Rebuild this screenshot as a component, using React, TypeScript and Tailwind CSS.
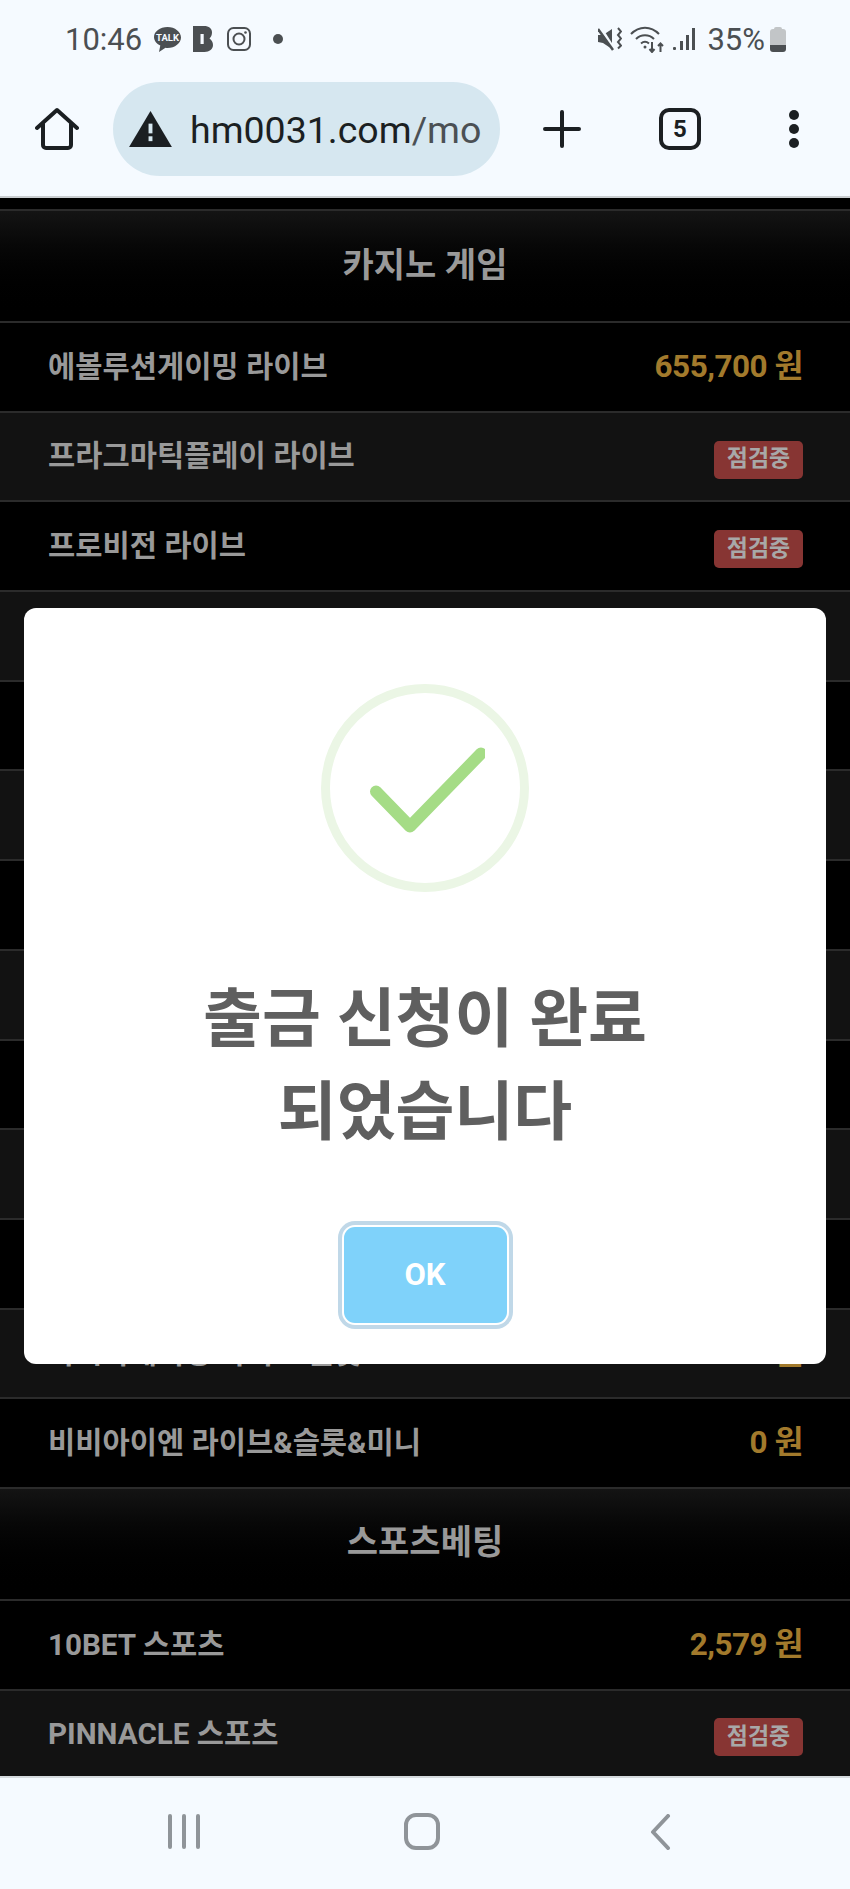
import React from 'react';

const fontStack = "font-['Roboto','Noto_Sans_CJK_KR',sans-serif]";

const Badge = () => (
  <span className="flex h-[38px] w-[89px] items-center justify-center rounded-[5px] bg-[#873533] text-[23px] font-bold text-[#a8a8a8]">
    점검중
  </span>
);

const Row = ({ name, value, dark }: { name: string; value?: string; dark: boolean }) => (
  <div
    className={`flex h-[89.7px] shrink-0 items-center justify-between border-b-2 border-[#2b2b2b] pl-12 pr-[47px] ${
      dark ? 'bg-black' : 'bg-[#121212]'
    }`}
  >
    <span className="text-[29.600px] font-bold text-[#999999]">{name}</span>
    {value ? (
      <span className="text-[31.500px] font-bold tracking-[-0.5px] text-[#a27a2c]">{value}</span>
    ) : (
      <div className="mt-[6px]">
        <Badge />
      </div>
    )}
  </div>
);

const SectionHead = ({ title }: { title: string }) => (
  <div className="flex h-[112px] shrink-0 items-center justify-center border-b-2 border-[#2b2b2b] bg-gradient-to-b from-[#141414] to-black">
    <span className="mb-[2px] text-[34px] font-bold text-[#999999]">{title}</span>
  </div>
);

const casinoRows: { name: string; value?: string }[] = [
  { name: '에볼루션게이밍 라이브', value: '655,700 원' },
  { name: '프라그마틱플레이 라이브' },
  { name: '프로비전 라이브' },
  { name: '드림게이밍 라이브' },
  { name: '아시아게이밍 라이브' },
  { name: '섹시게이밍 라이브' },
  { name: '마이크로게이밍 라이브' },
  { name: '비보게이밍 라이브' },
  { name: '오리엔탈게이밍 라이브' },
  { name: '올벳게이밍 라이브' },
  { name: '타이산게이밍 라이브' },
  { name: '아시아게이밍 라이브 슬롯', value: '0 원' },
  { name: '비비아이엔 라이브&슬롯&미니', value: '0 원' },
];

const StatusBar = () => (
  <div className="flex h-[66px] items-center justify-between pl-[65px] pr-[64px] pt-3">
    <div className="flex items-center">
      <span className="text-[31px] leading-none text-[#4b4f52]">10:46</span>
      {/* talk bubble */}
      <svg width="27" height="25" viewBox="0 0 27 25" className="ml-[12px]">
        <path d="M13.500 0C6 0 0 4.500 0 10c0 3.600 2.500 6.700 6.300 8.500L5 25l6.500-4.200c.7.100 1.300.200 2 .200 7.500 0 13.500-4.900 13.500-10.500S21 0 13.500 0z" fill="#4b4f52" />
        <text x="13.500" y="14" textAnchor="middle" fontSize="9.500" fontWeight="700" fill="#f5faff" fontFamily="Roboto">TALK</text>
      </svg>
      <svg width="20" height="26" viewBox="0 0 20 26" className="ml-[12px]">
        <path d="M0 0h11c5 0 8 2.500 8 6.500 0 2.500-1 4.500-2.500 6 2 1.500 3.500 3.500 3.500 6.500 0 4-3.500 7-8.500 7H0z" fill="#4b4f52" />
        <rect x="7.500" y="8" width="3.200" height="10" fill="#f5faff" />
      </svg>
      <svg width="24" height="24" viewBox="0 0 24 24" fill="none" stroke="#4b4f52" strokeWidth="2" className="ml-[14px]">
        <rect x="1" y="1" width="22" height="22" rx="5.500" />
        <circle cx="12" cy="12" r="5.500" />
        <circle cx="18.500" cy="5.500" r="1.300" fill="#4b4f52" stroke="none" />
      </svg>
      <span className="ml-[22px] h-[10px] w-[10px] rounded-full bg-[#4b4f52]" />
    </div>
    <div className="flex items-center">
      {/* muted vibrate */}
      <svg width="24" height="24" viewBox="0 0 24 24" className="mr-[8px]">
        <path d="M0 8h5l9-6v20l-9-6-5-1z" fill="#4b4f52" />
        <path d="M2 0l14 22" stroke="#f5faff" strokeWidth="3" />
        <path d="M0 2l15 21" stroke="#4b4f52" strokeWidth="2.500" />
        <path d="M20 1l3 3.500-3 3.500 3 3.500-3 3.500 3 3.500-3 3" stroke="#4b4f52" strokeWidth="2" fill="none" />
      </svg>
      <svg width="34" height="27" viewBox="0 0 34 27" fill="none" stroke="#4b4f52" strokeWidth="2" className="mr-[9px]">
        <path d="M1 8c8-8.500 20-8.500 28 0" />
        <path d="M6 13c5-5 13-5 18 0" />
        <path d="M11 17.500c2.500-2.200 5.500-2.200 8 0" />
        <circle cx="15" cy="21" r="1.500" fill="#4b4f52" stroke="none" />
        <path d="M22 16v10M19.500 23l2.500 3 2.500-3" />
        <path d="M30.500 26v-8M28 20l2.500-2.500L33 20" />
      </svg>
      <svg width="22" height="24" viewBox="0 0 22 24" fill="#4b4f52" className="mr-[12px]">
        <rect x="0" y="20" width="3" height="3" rx="1" />
        <rect x="7" y="14" width="3" height="9" />
        <rect x="13" y="8" width="3" height="15" />
        <rect x="19" y="1" width="3" height="22" />
      </svg>
      <span className="text-[31px] leading-none text-[#4b4f52]">35%</span>
      <div className="ml-[5px] flex h-[25px] w-4 flex-col">
        <div className="mx-auto h-[2px] w-2 rounded-t-sm bg-[#c2c5c7]" />
        <div className="flex-1 rounded-t-[3px] bg-[#c2c5c7]" />
        <div className="h-[7px] rounded-b-[3px] bg-[#4b4f52]" />
      </div>
    </div>
  </div>
);

const BrowserBar = () => (
  <div className="flex h-[130px] items-start">
    <div className="flex w-[113px] justify-center pt-[41px]">
      <svg width="44" height="44" viewBox="0 0 44 44" fill="none" stroke="#1b1f22" strokeWidth="4" strokeLinejoin="round" strokeLinecap="round">
        <path d="M2 21L22 3l20 18" />
        <path d="M8 17v21a3 3 0 0 0 3 3h22a3 3 0 0 0 3-3V17" />
      </svg>
    </div>
    <div className="mt-[16px] flex h-[94px] w-[387px] items-center overflow-hidden rounded-full bg-[#d6e7f0] pl-4">
      <svg width="43" height="37" viewBox="0 0 44 38" className="mt-[-2px]">
        <path d="M22 1L44 38H0z" fill="#1b1f22" />
        <rect x="20" y="14" width="4" height="10" fill="#d6e7f0" />
        <rect x="20" y="27" width="4" height="5" fill="#d6e7f0" />
      </svg>
      <span className="ml-[18px] mt-[2px] text-[37.500px] text-[#1b1f22]">
        hm0031.com<span className="text-[#4b5054]">/mo</span>
      </span>
    </div>
    <div className="flex w-[123px] justify-center pt-[44px]">
      <svg width="38" height="38" viewBox="0 0 38 38" stroke="#1b1f22" strokeWidth="4" strokeLinecap="round">
        <path d="M19 2v34M2 19h34" />
      </svg>
    </div>
    <div className="ml-[-1px] flex w-[116px] justify-center pt-[42px]">
      <div className="flex h-[42px] w-[42px] items-center justify-center rounded-[10px] border-[4px] border-[#1b1f22] text-[24px] font-bold text-[#1b1f22]">
        5
      </div>
    </div>
    <div className="flex flex-1 flex-col items-center gap-[4px] pr-[1px] pt-[44px]">
      <span className="h-[10px] w-[10px] rounded-full bg-[#1b1f22]" />
      <span className="h-[10px] w-[10px] rounded-full bg-[#1b1f22]" />
      <span className="h-[10px] w-[10px] rounded-full bg-[#1b1f22]" />
    </div>
  </div>
);

const Modal = () => (
  <div className="absolute left-6 top-[608px] flex h-[756px] w-[802px] flex-col items-center rounded-[12px] bg-white">
    <div className="mt-[76px] flex h-[208px] w-[208px] items-center justify-center rounded-full border-[9px] border-[#ebf6e5]">
      <svg width="120" height="90" viewBox="0 0 120 90" fill="none" stroke="#a5dc86" strokeWidth="12" strokeLinecap="round" strokeLinejoin="round">
        <path d="M11 48.500l34 35 71-73" />
      </svg>
    </div>
    <div className="mt-[81px] text-center text-[64px] font-semibold leading-[93px] text-[#5f5f5f]">
      출금 신청이 완료
      <br />
      되었습니다
    </div>
    <button className="mt-[68px] flex h-[96px] w-[163px] items-center justify-center rounded-[11px] bg-[#7fd2fa] text-[31px] font-bold text-white shadow-[0_0_0_2px_#ffffff,0_0_0_6px_#c0d8e8]">
      OK
    </button>
  </div>
);

export default function App() {
  return (
    <div className={`relative flex h-[1889px] w-[850px] flex-col overflow-hidden bg-[#f5faff] ${fontStack}`}>
      <div className="h-[198px] shrink-0 border-b-2 border-[#c9cdd0]">
        <StatusBar />
        <BrowserBar />
      </div>
      <div className="flex h-[1578px] shrink-0 flex-col overflow-hidden bg-black">
        <div className="mt-[11px] shrink-0 border-b-2 border-[#2b2b2b]" />
        <SectionHead title="카지노 게임" />
        {casinoRows.map((row, i) => (
          <Row key={row.name} name={row.name} value={row.value} dark={i % 2 === 0} />
        ))}
        <SectionHead title="스포츠베팅" />
        <Row name="10BET 스포츠" value="2,579 원" dark />
        <Row name="PINNACLE 스포츠" dark={false} />
      </div>
      <div className="flex flex-1 items-center border-t-2 border-[#d5dade] pb-1 pl-[168px]">
        <div className="flex gap-[10px]">
          <span className="h-[35px] w-[4px] rounded-sm bg-[#8f9499]" />
          <span className="h-[35px] w-[4px] rounded-sm bg-[#8f9499]" />
          <span className="h-[35px] w-[4px] rounded-sm bg-[#8f9499]" />
        </div>
        <div className="ml-[204px] h-[37px] w-[36px] rounded-[12px] border-[4px] border-[#8f9499]" />
        <svg width="22" height="36" viewBox="0 0 22 36" fill="none" stroke="#8f9499" strokeWidth="4" strokeLinecap="round" strokeLinejoin="round" className="ml-[209px]">
          <path d="M19 2L4 18l15 16" />
        </svg>
      </div>
      <Modal />
    </div>
  );
}
